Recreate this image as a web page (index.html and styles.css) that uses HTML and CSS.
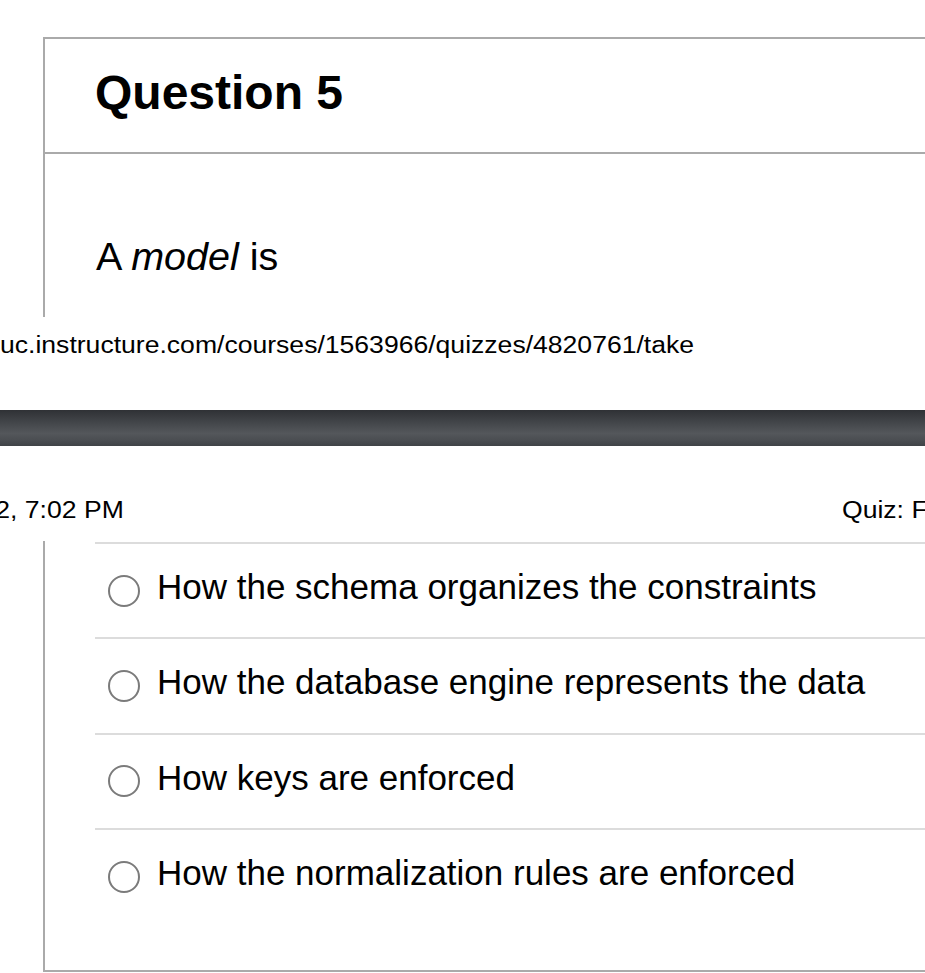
FILE: index.html
```html
<!DOCTYPE html>
<html lang="en">
<head>
<meta charset="utf-8">
<title>Quiz: Question 5</title>
<link rel="stylesheet" href="styles.css">
</head>
<body>
<div class="page page-top">
  <div class="qbox">
    <div class="qhead"><h2 class="qtitle">Question 5</h2></div>
    <div class="qbody"><p class="qtext">A <em>model</em> is</p></div>
  </div>
</div>
<div class="print-footer"><span class="print-text">uc.instructure.com/courses/1563966/quizzes/4820761/take</span></div>
<div class="page-gap"></div>
<div class="print-header">
  <div class="print-date"><span class="print-text print-text-right">12/5/2022, 7:02 PM</span></div>
  <div class="print-title"><span class="print-text">Quiz: Final Exam</span></div>
</div>
<div class="page page-bottom">
  <div class="qbox">
    <div class="answers">
      <div class="answer"><span class="radio"></span><span class="answer-text">How the schema organizes the constraints</span></div>
      <div class="answer"><span class="radio"></span><span class="answer-text">How the database engine represents the data</span></div>
      <div class="answer"><span class="radio"></span><span class="answer-text">How keys are enforced</span></div>
      <div class="answer"><span class="radio"></span><span class="answer-text">How the normalization rules are enforced</span></div>
    </div>
  </div>
</div>
</body>
</html>
```
FILE: styles.css
```css
html, body {
  margin: 0;
  padding: 0;
}

body {
  width: 925px;
  height: 973px;
  overflow: hidden;
  background: #fff;
  color: #000;
  font-family: "Liberation Sans", Arial, sans-serif;
}

.page-top {
  height: 317px;
  box-sizing: border-box;
  padding-top: 37px;
  overflow: hidden;
  display: flex;
  flex-direction: column;
}

.qbox {
  margin-left: 43px;
  width: 1000px;
  border-left: 2px solid #aaaaaa;
}

.page-top .qbox {
  flex: 1;
  border-top: 2px solid #aaaaaa;
}

.qhead {
  height: 115px;
  box-sizing: border-box;
  padding: 27px 0 0 50px;
  border-bottom: 2px solid #aaaaaa;
}

.qtitle {
  margin: 0;
  font-size: 48px;
  line-height: 54px;
  font-weight: bold;
}

.qbody {
  padding: 80px 0 0 51px;
}

.qtext {
  margin: 0;
  font-size: 39.5px;
  line-height: 44px;
}

.print-footer {
  height: 93px;
  box-sizing: border-box;
  padding-top: 15px;
}

.print-text {
  display: inline-block;
  font-size: 23px;
  line-height: 26px;
  white-space: nowrap;
  transform: scaleX(1.155);
  transform-origin: left center;
}

.print-text-right {
  transform-origin: right center;
}

.page-gap {
  height: 36px;
  background: linear-gradient(to bottom, #2f3135 0%, #43464a 35%, #54575b 65%, #4a4d51 85%, #404347 100%);
}

.print-header {
  height: 95px;
  box-sizing: border-box;
  padding-top: 51px;
  display: flex;
}

.print-date {
  width: 124px;
  flex: none;
  display: flex;
  justify-content: flex-end;
}

.print-title {
  margin-left: 718px;
  flex: none;
}

.page-bottom .qbox {
  height: 429px;
  border-bottom: 2px solid #aaaaaa;
}

.answers {
  margin-left: 50px;
  padding-top: 1px;
}

.answer {
  display: flex;
  align-items: center;
  height: 93.3px;
  border-top: 2px solid #dcdcdc;
}

.radio {
  flex: none;
  width: 32px;
  height: 32px;
  box-sizing: border-box;
  margin-left: 12.5px;
  border: 2px solid #7b7b7b;
  border-radius: 50%;
}

.answer-text {
  margin-left: 17.5px;
  padding-bottom: 7px;
  font-size: 35px;
  line-height: 40px;
  white-space: nowrap;
}
```
